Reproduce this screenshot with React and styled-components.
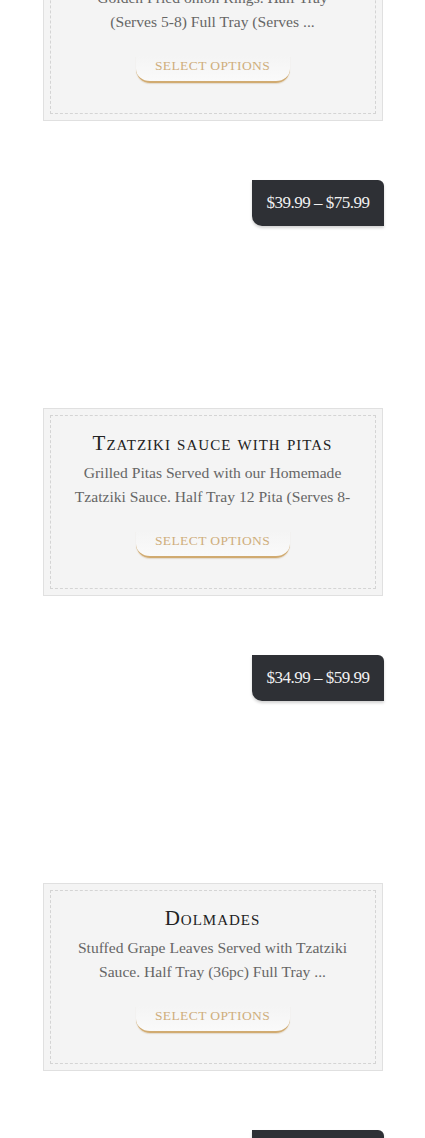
import React from 'react';
import styled, { createGlobalStyle } from 'styled-components';

const Global = createGlobalStyle`
  html, body { margin: 0; padding: 0; background: #fff; }
  body { overflow: hidden; }
`;

const products = [
  {
    title: 'Onion Rings',
    desc: ['Golden Fried onion Rings. Half Tray', '(Serves 5-8) Full Tray (Serves ...'],
    price: '$29.99 – $54.99',
  },
  {
    title: 'Tzatziki sauce with pitas',
    desc: ['Grilled Pitas Served with our Homemade', 'Tzatziki Sauce. Half Tray 12 Pita (Serves 8-'],
    price: '$39.99 – $75.99',
  },
  {
    title: 'Dolmades',
    desc: ['Stuffed Grape Leaves Served with Tzatziki', 'Sauce. Half Tray (36pc) Full Tray ...'],
    price: '$34.99 – $59.99',
  },
  {
    title: 'Spanakopita',
    desc: ['Spinach and Feta Cheese Pie.', 'Half Tray Full Tray ...'],
    price: '$44.99 – $84.99',
  },
];

export default function App() {
  return (
    <>
      <Global />
      <Page>
        {products.map((p, i) => (
          <Item key={i}>
            {i > 0 && (
              <ImageBox>
                <Price>{p.price}</Price>
              </ImageBox>
            )}
            <Card>
              <Inner>
                <Title>{p.title}</Title>
                <Desc>
                  {p.desc.map((l, j) => (
                    <span key={j}>{l}</span>
                  ))}
                </Desc>
                <Button>Select options</Button>
              </Inner>
            </Card>
          </Item>
        ))}
      </Page>
    </>
  );
}

const Page = styled.div`
  display: flex;
  flex-direction: column;
  align-items: center;
  margin-top: -67px;
  height: 1205px;
  overflow: hidden;
`;

const Item = styled.div`
  display: flex;
  flex-direction: column;
  width: 340px;
`;

const ImageBox = styled.div`
  position: relative;
  height: 287px;
`;

const Price = styled.div`
  position: absolute;
  top: 59px;
  right: -1px;
  height: 46px;
  padding: 0 14px 0 15px;
  display: flex;
  align-items: center;
  background: #2e3035;
  color: #f1f1f1;
  font-family: 'Liberation Serif', serif;
  font-size: 17px;
  letter-spacing: -0.5px;
  border-radius: 0 6px 0 10px;
  box-shadow: 0 2px 3px rgba(0, 0, 0, 0.18);
`;

const Card = styled.div`
  background: #f4f4f4;
  border: 1px solid #e0e0e0;
  padding: 6px;
  height: 188px;
  box-sizing: border-box;
`;

const Inner = styled.div`
  height: 100%;
  box-sizing: border-box;
  border: 1px dashed #d4d4d4;
  display: flex;
  flex-direction: column;
  align-items: center;
  padding-top: 14px;
`;

const Title = styled.h3`
  margin: 0;
  font-family: 'Liberation Serif', serif;
  font-weight: normal;
  font-variant: small-caps;
  font-size: 21px;
  letter-spacing: 1px;
  color: #222;
  line-height: 26px;
`;

const Desc = styled.p`
  margin: 5px 0 0;
  display: flex;
  flex-direction: column;
  align-items: center;
  font-family: 'Liberation Serif', serif;
  font-size: 15.6px;
  line-height: 24px;
  color: #666;
  white-space: nowrap;
`;

const Button = styled.div`
  margin-top: 22px;
  width: 154px;
  height: 27px;
  box-sizing: border-box;
  border-bottom: 2px solid #d1ab71;
  border-radius: 0 0 14px 14px;
  text-align: center;
  font-family: 'Liberation Serif', serif;
  font-size: 13.5px;
  text-transform: uppercase;
  letter-spacing: 0.4px;
  color: #cfae7c;
  line-height: 20px;
  background: linear-gradient(#f4f4f4, #fafafa);
  box-shadow: 0 1px 1px rgba(180, 140, 80, 0.25);
`;
